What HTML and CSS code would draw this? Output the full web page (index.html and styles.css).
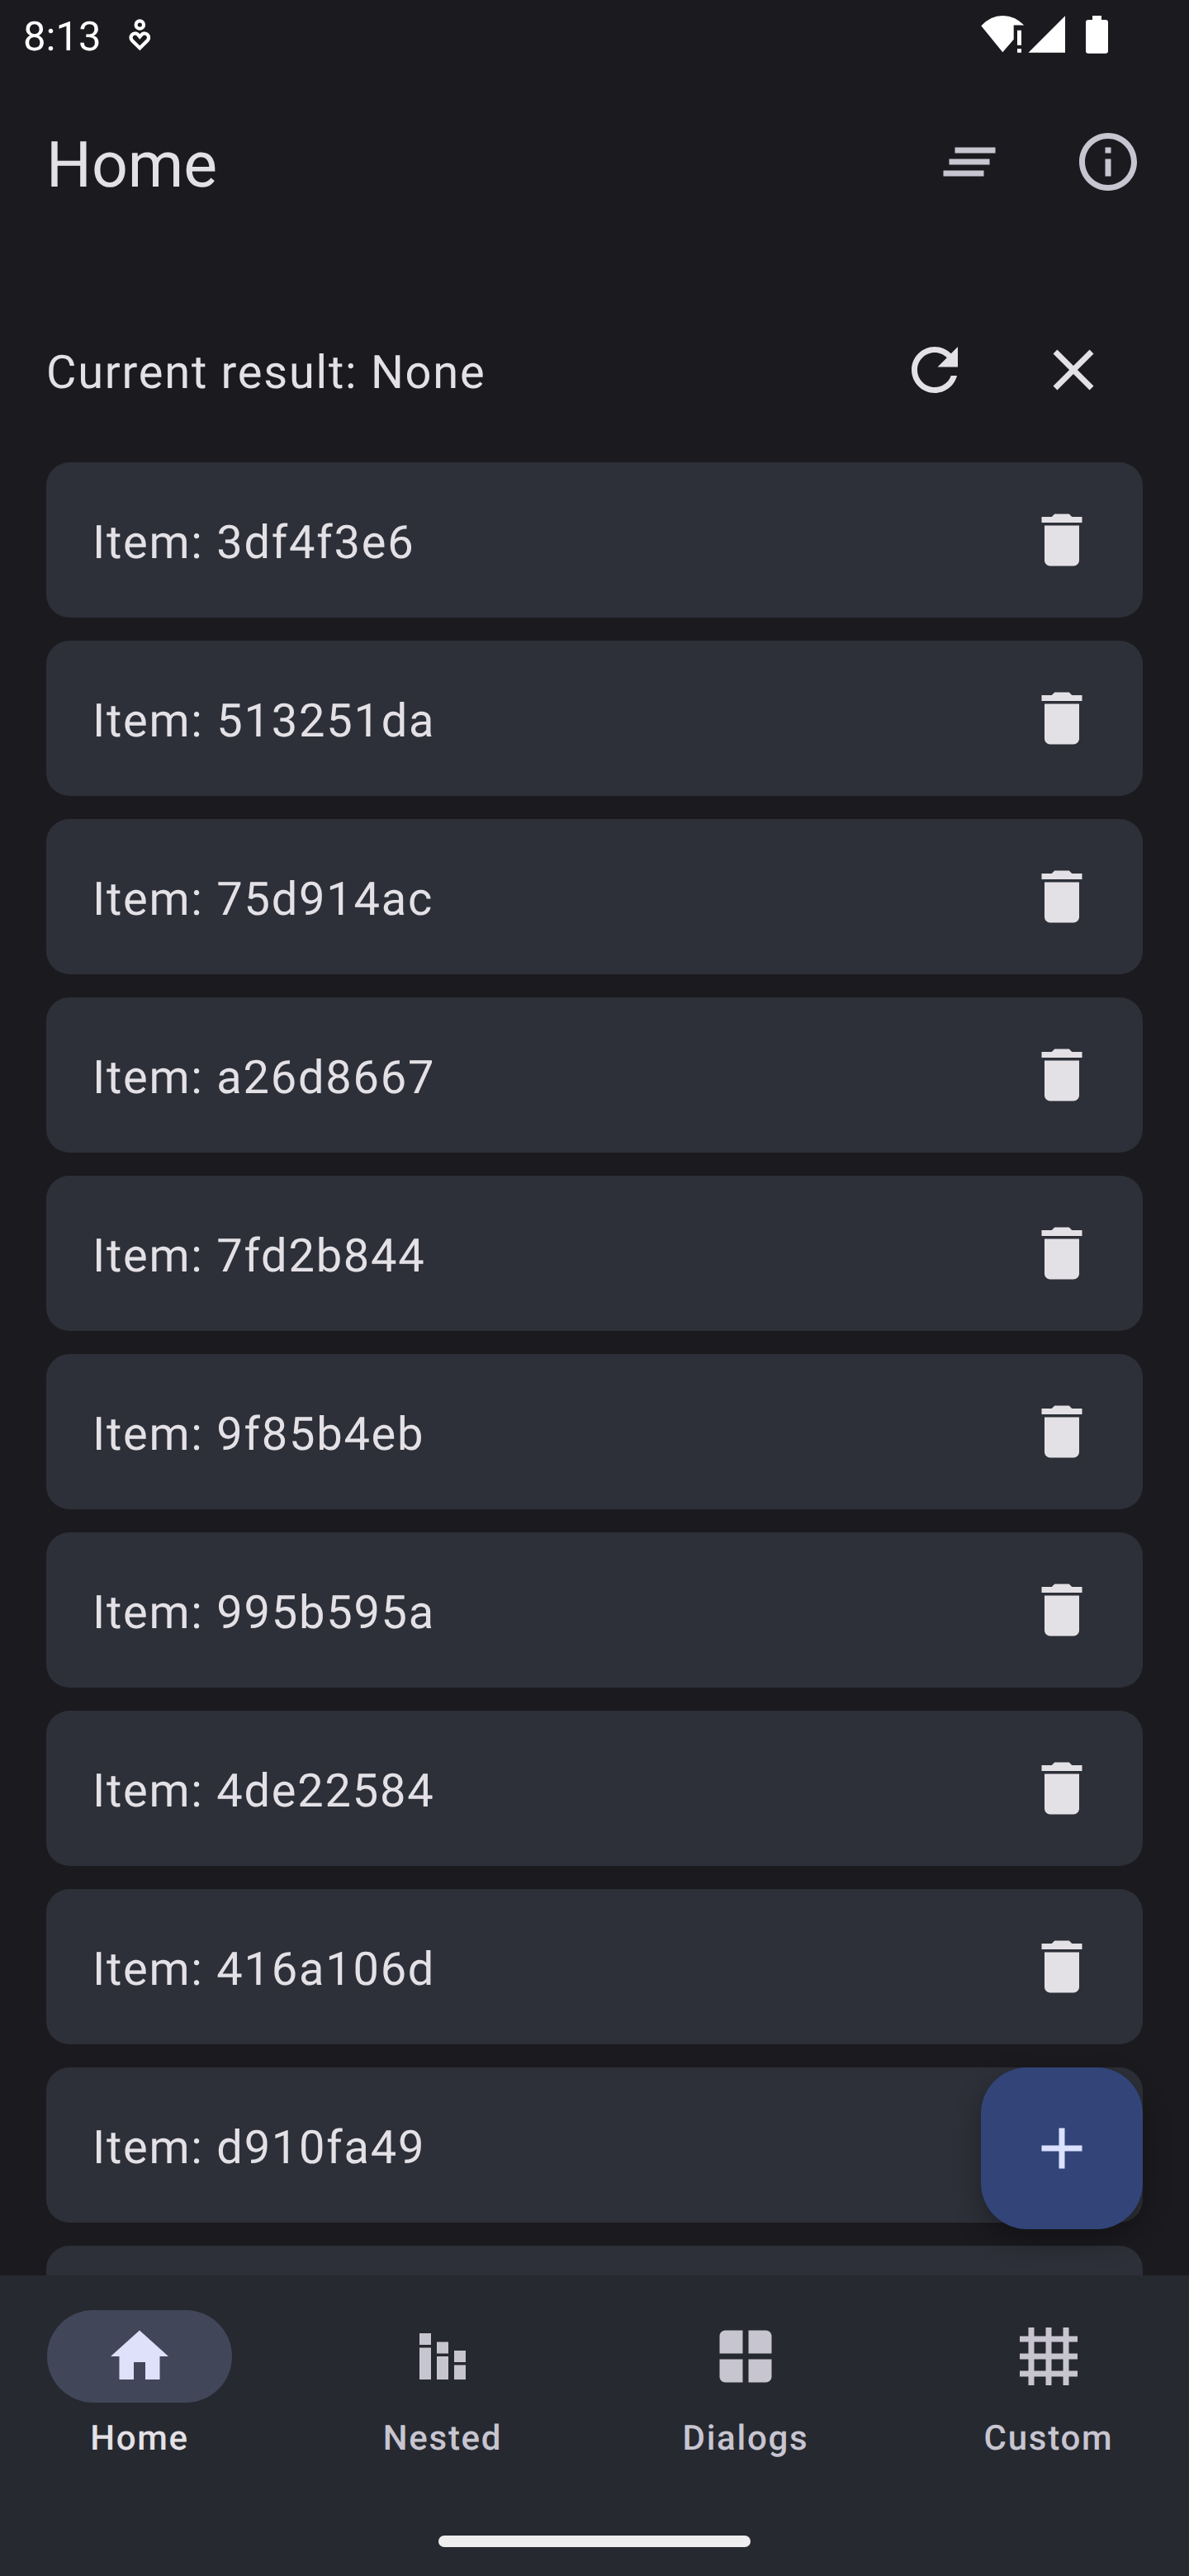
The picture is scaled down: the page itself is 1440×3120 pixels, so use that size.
FILE: index.html
```html
<!DOCTYPE html>
<html lang="en">
<head>
<meta charset="utf-8">
<title>Home</title>
<link rel="stylesheet" href="styles.css">
</head>
<body>
<div class="screen">
  <div class="status-bar">
    <span class="clock">8:13</span>
    <svg class="status-person" viewBox="0 0 30 46" fill="none" stroke="#fff" stroke-width="4.2"><circle cx="15.3" cy="13" r="4.7"/><path d="M15.3 41.2 5.700 31.700A5 5 0 0 1 12.800 24.700L15.300 27.600l2.500-2.900A5 5 0 0 1 24.900 31.700z"/></svg>
    <svg class="status-system" viewBox="0 0 160 50" fill="#fff"><path d="M2.3 14.3Q13.500 2 28.300 2T54.300 13.500H41.700V30.700L28.300 46.300zM46 19.700h5v18h-5zM46 42h5v4.700h-5zM59.500 46.700 104 2.300v44.400zM137 2h11v5h5a3 3 0 0 1 3 3v35a3 3 0 0 1-3 2.700h-21a3 3 0 0 1-3-2.700V10a3 3 0 0 1 3-3h5z"/></svg>
  </div>
  <header class="app-bar">
    <h1 class="title">Home</h1>
    <svg class="icon" viewBox="0 0 24 24"><path d="M5 13h14v-2H5v2zm-2 4h14v-2H3v2zM7 7v2h14V7H7z"/></svg>
    <svg class="icon" viewBox="0 0 24 24"><path d="M11 7h2v2h-2zm0 4h2v6h-2zm1-9C6.480 2 2 6.480 2 12s4.480 10 10 10 10-4.480 10-10S17.520 2 12 2zm0 18c-4.410 0-8-3.590-8-8s3.590-8 8-8 8 3.590 8 8-3.590 8-8 8z"/></svg>
  </header>
  <main class="content">
    <div class="result">
      <span class="result-text">Current result: None</span>
      <svg class="icon" viewBox="0 0 24 24"><path d="M17.650 6.350C16.200 4.900 14.210 4 12 4c-4.420 0-7.990 3.580-7.990 8s3.570 8 7.990 8c3.730 0 6.840-2.550 7.730-6h-2.080c-.82 2.330-3.040 4-5.650 4-3.310 0-6-2.690-6-6s2.690-6 6-6c1.660 0 3.140.69 4.220 1.780L13 11h7V4l-2.350 2.350z"/></svg>
      <svg class="icon" viewBox="0 0 24 24"><path d="M19 6.410 17.590 5 12 10.590 6.410 5 5 6.410 10.590 12 5 17.590 6.410 19 12 13.410 17.590 19 19 17.590 13.410 12z"/></svg>
    </div>
    <svg width="0" height="0" class="defs"><symbol id="trash" viewBox="0 0 24 24"><path d="M6 19c0 1.100.9 2 2 2h8c1.100 0 2-.9 2-2V7H6v12zM19 4h-3.500l-1-1h-5l-1 1H5v2h14V4z"/></symbol></svg>
    <div class="list">
      <div class="card"><span class="item">Item: 3df4f3e6</span><svg class="icon"><use href="#trash"/></svg></div>
      <div class="card"><span class="item">Item: 513251da</span><svg class="icon"><use href="#trash"/></svg></div>
      <div class="card"><span class="item">Item: 75d914ac</span><svg class="icon"><use href="#trash"/></svg></div>
      <div class="card"><span class="item">Item: a26d8667</span><svg class="icon"><use href="#trash"/></svg></div>
      <div class="card"><span class="item">Item: 7fd2b844</span><svg class="icon"><use href="#trash"/></svg></div>
      <div class="card"><span class="item">Item: 9f85b4eb</span><svg class="icon"><use href="#trash"/></svg></div>
      <div class="card"><span class="item">Item: 995b595a</span><svg class="icon"><use href="#trash"/></svg></div>
      <div class="card"><span class="item">Item: 4de22584</span><svg class="icon"><use href="#trash"/></svg></div>
      <div class="card"><span class="item">Item: 416a106d</span><svg class="icon"><use href="#trash"/></svg></div>
      <div class="card"><span class="item">Item: d910fa49</span></div>
      <div class="card"></div>
    </div>
    <div class="fab"><svg class="icon" viewBox="0 0 24 24"><path d="M19 13h-6v6h-2v-6H5v-2h6V5h2v6h6v2z"/></svg></div>
  </main>
  <nav class="nav">
    <div class="tabs">
      <div class="tab active"><div class="pill"><svg class="icon" viewBox="0 0 24 24"><path d="M10 20v-6h4v6h5v-8h3L12 3 2 12h3v8z"/></svg></div><span>Home</span></div>
      <div class="tab"><div class="pill"><svg class="icon" viewBox="0 0 24 24"><path d="M4 9h4v11H4zm0-5h4v4H4zm6 3h4v4h-4zm6 3h4v4h-4zm0 5h4v5h-4zm-6-3h4v8h-4z"/></svg></div><span>Nested</span></div>
      <div class="tab"><div class="pill"><svg class="icon" viewBox="0 0 24 24"><path d="M11 21H5c-1.100 0-2-.9-2-2v-6h8v8zm2 0h6c1.100 0 2-.9 2-2v-6h-8v8zm8-10V5c0-1.100-.9-2-2-2h-6v8h8zm-10 0V3H5c-1.100 0-2 .9-2 2v6h8z"/></svg></div><span>Dialogs</span></div>
      <div class="tab"><div class="pill"><svg class="icon" viewBox="0 0 24 24"><path d="M5 2h2v20H5zM11 2h2v20h-2zM17 2h2v20h-2zM2 5h20v2H2zM2 11h20v2H2zM2 17h20v2H2z"/></svg></div><span>Custom</span></div>
    </div>
    <div class="handle"></div>
  </nav>
</div>
</body>
</html>
```
FILE: styles.css
```css
* { box-sizing: border-box; }
body { margin: 0; background: #1b1b1f; font-family: Roboto, sans-serif; color: #e4e1e6; text-rendering: geometricPrecision; }
.screen { width: 1440px; height: 3120px; display: flex; flex-direction: column; overflow: hidden; }
.icon { width: 84px; height: 84px; flex: none; fill: currentColor; display: block; }
.status-bar { height: 88px; flex: none; display: flex; align-items: flex-start; padding: 17px 94px 0 28px; color: #fff; }
.clock { width: 96px; font-size: 49px; line-height: 56px; }
.status-person { width: 30px; height: 46px; margin-left: 30px; }
.status-system { width: 160px; height: 50px; margin-left: auto; }
.app-bar { height: 216px; flex: none; display: flex; align-items: center; gap: 84px; padding: 0 56px; color: #c7c5d0; }
.title { flex: 1; margin: 0; padding-top: 8px; font-size: 77px; line-height: 98px; font-weight: 400; color: #e4e1e6; }
.content { flex: 1; min-height: 0; position: relative; overflow: hidden; padding: 60px 56px 0; }
.defs { display: block; }
.result { height: 168px; display: flex; align-items: center; gap: 84px; padding-right: 42px; font-size: 56px; letter-spacing: 1.75px; }
.result-text { flex: 1; padding-top: 6px; line-height: 84px; }
.list { display: flex; flex-direction: column; gap: 28px; margin-top: 28px; }
.card { height: 188px; flex: none; border-radius: 28px; background: #2d3038; padding: 0 56px; display: flex; align-items: center; justify-content: space-between; font-size: 56px; line-height: 84px; letter-spacing: 1.75px; }
.item { padding-top: 6px; }
.fab { position: absolute; right: 56px; bottom: 56px; width: 196px; height: 196px; border-radius: 56px; background: #324478; color: #dbe1ff; display: flex; align-items: center; justify-content: center; box-shadow: 0 14px 34px rgba(0,0,0,.3); }
.nav { height: 364px; flex: none; background: #262930; padding-top: 42px; display: flex; flex-direction: column; align-items: center; }
.tabs { width: 100%; display: grid; grid-template-columns: repeat(4, 338px); column-gap: 29px; }
.tab { display: flex; flex-direction: column; align-items: center; gap: 16px; color: #c7c5d0; font-size: 42px; font-weight: 500; line-height: 56px; letter-spacing: 1.75px; }
.pill { width: 224px; height: 112px; border-radius: 56px; display: flex; align-items: center; justify-content: center; }
.active { color: #e4e1e6; }
.active .pill { background: #424659; color: #dee1f9; }
.handle { width: 378px; height: 14px; border-radius: 7px; background: #eee; margin-top: 89px; }
```
